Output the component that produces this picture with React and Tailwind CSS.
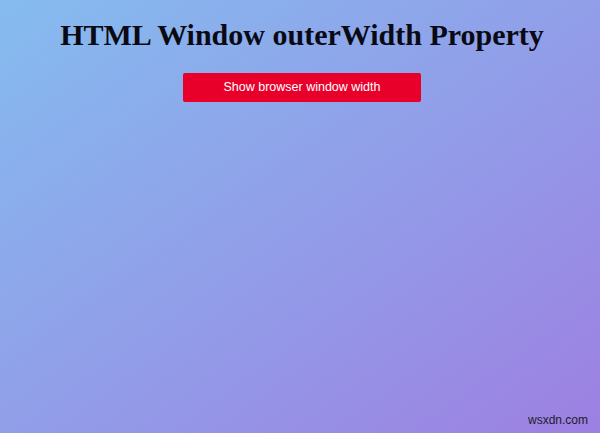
export default function App() {
  return (
    <div className="relative w-[600px] h-[433px] overflow-hidden bg-[linear-gradient(to_bottom_right,#85bcef,#9d80e2)]">
      <div className="flex flex-col items-center">
        <h1 className="mt-[17px] ml-[4px] text-[30px] leading-[35px] font-bold text-[#0a0a14] font-['Liberation_Serif',serif]">
          HTML Window outerWidth Property
        </h1>
        <button className="mt-[21px] ml-[4px] w-[238px] h-[29px] rounded-[2px] bg-[#e8002b] text-white text-[12.5px] font-['Liberation_Sans',Arial,sans-serif]">
          Show browser window width
        </button>
      </div>
      <div className="absolute right-[12px] bottom-[4px] text-[12px] text-[#1c1c2c] font-['Liberation_Sans',Arial,sans-serif]">
        wsxdn.com
      </div>
    </div>
  );
}
